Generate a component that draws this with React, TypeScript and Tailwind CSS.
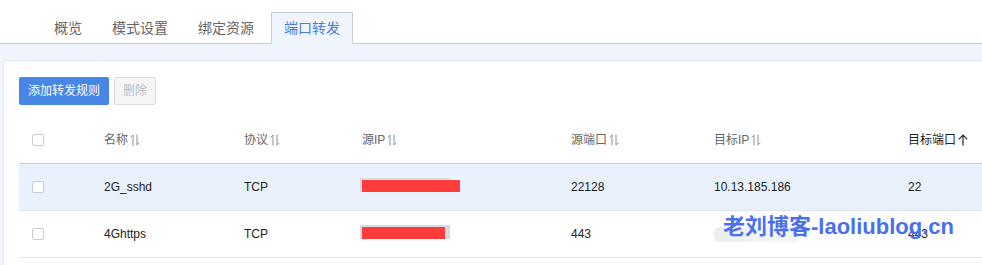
import React from "react";

const tabs = ["概览", "模式设置", "绑定资源", "端口转发"];
const active = 3;

const cols = "grid grid-cols-[85px_140px_118px_209px_143px_194px_1fr]";

function SortIcon() {
  return (
    <svg width="10" height="12" viewBox="0 0 10 12" className="ml-[2px] shrink-0">
      <path d="M3 11.5V1L0.8 3.4" fill="none" stroke="#8a8f99" strokeWidth="1" />
      <path d="M7 0.5V11L9.2 8.6" fill="none" stroke="#8a8f99" strokeWidth="1" />
    </svg>
  );
}

function UpIcon() {
  return (
    <svg width="12" height="12" viewBox="0 0 12 12" className="ml-[1px] shrink-0">
      <path d="M6 11.5V1.2M1.8 5.4L6 1.2l4.2 4.2" fill="none" stroke="#1f2a3a" strokeWidth="1.2" />
    </svg>
  );
}

function Checkbox() {
  return <div className="w-[12px] h-[12px] rounded-[2px] border border-[#c6cbd6] bg-white" />;
}

type Row = { name: string; proto: string; srcPort: string; dstIp: string; dstPort: string; bar: number; hover?: boolean; blurIp?: boolean };

const rows: Row[] = [
  { name: "2G_sshd", proto: "TCP", srcPort: "22128", dstIp: "10.13.185.186", dstPort: "22", bar: 98, hover: true },
  { name: "4Ghttps", proto: "TCP", srcPort: "443", dstIp: "", dstPort: "443", bar: 83, blurIp: true },
];

function HeaderCell({ label, sorted }: { label: string; sorted?: boolean }) {
  return (
    <div className={`flex items-center ${sorted ? "text-[#222]" : "text-[#666]"}`}>
      <span>{label}</span>
      {sorted ? <UpIcon /> : <SortIcon />}
    </div>
  );
}

export default function App() {
  return (
    <div className="relative w-[982px] h-[265px] overflow-hidden bg-[#f0f4fc] font-['Liberation_Sans','Noto_Sans_CJK_SC',sans-serif]">
      {/* Tabs */}
      <div className="h-[44px] bg-white border-b border-[#c5cad8] flex items-end pl-[41px]">
        {tabs.map((t, i) => (
          <div
            key={t}
            className={`h-[32px] -mb-px mr-[4px] px-[12px] flex items-center text-[14px] border ${
              i === active
                ? "bg-[#f0f4fc] border-[#c5cad8] border-b-[#f0f4fc] text-[#4a7ce0]"
                : "border-transparent text-[#666]"
            }`}
          >
            {t}
          </div>
        ))}
      </div>

      {/* Card */}
      <div className="mt-[16px] ml-[3px] mr-[-10px] bg-white border border-[#e2e6ee] rounded-tl-[4px] pt-[16px] pl-[15px] h-[240px]">
        <div className="flex gap-[5px]">
          <button className="h-[28px] px-[9px] rounded-[2px] bg-[#4886e6] text-white text-[12px]">添加转发规则</button>
          <button className="h-[28px] px-[8px] rounded-[2px] bg-[#f6f6f6] border border-[#dcdcdc] text-[#bdbdbd] text-[12px]">删除</button>
        </div>

        <div className="mt-[12px] text-[12px]">
          <div className={`${cols} h-[47px] items-center border-b border-[#c8cdd9]`}>
            <div className="pl-[13px]">
              <Checkbox />
            </div>
            <HeaderCell label="名称" />
            <HeaderCell label="协议" />
            <HeaderCell label="源IP" />
            <HeaderCell label="源端口" />
            <HeaderCell label="目标IP" />
            <HeaderCell label="目标端口" sorted />
          </div>

          {rows.map((r) => (
            <div
              key={r.name}
              className={`${cols} h-[47px] items-center border-b border-[#dfe4ee] text-[#222] ${r.hover ? "bg-[#e9f1fc]" : "bg-white"}`}
            >
              <div className="pl-[13px]">
                <Checkbox />
              </div>
              <div>{r.name}</div>
              <div>{r.proto}</div>
              <div className="relative h-[14px]">
                <div className="absolute left-[-2px] top-[-2px] w-[90px] h-[14px] bg-[#d7dadf]" />
                <div className="absolute left-0 top-0 h-[12px] bg-[#ff3b3b]" style={{ width: r.bar }} />
              </div>
              <div>{r.srcPort}</div>
              <div className="relative">
                {r.blurIp ? (
                  <div className="w-[84px] h-[15px] rounded-l-[6px] bg-gradient-to-r from-[#eceef1] to-[#f6f7f8]" />
                ) : (
                  r.dstIp
                )}
              </div>
              <div>{r.dstPort}</div>
            </div>
          ))}
        </div>
      </div>

      {/* Watermark */}
      <div className="absolute left-[723px] top-[214px] text-[22px] font-bold text-[#4a6ff0] leading-[26px] whitespace-nowrap">
        老刘博客-laoliublog.cn
      </div>
    </div>
  );
}
